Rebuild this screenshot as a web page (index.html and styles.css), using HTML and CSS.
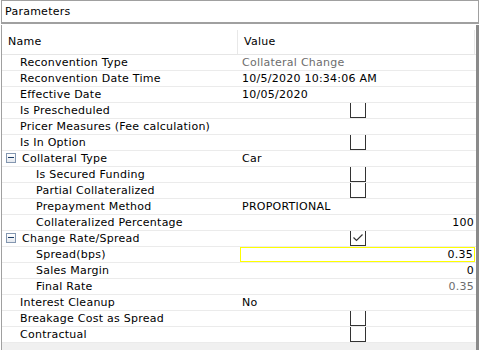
FILE: index.html
```html
<!DOCTYPE html>
<html lang="en">
	<head>
		<meta charset="utf-8">
		<title>Parameters</title>
		<link rel="stylesheet" href="styles.css">
	</head>
	<body>
	<div class="panel">
		<div class="panel-title">Parameters</div>
		<div class="grid">
			<div class="grid-head">
				<div class="col-name">Name</div>
				<div class="col-value">Value</div>
			</div>
			<div class="row"><div class="name lvl1">Reconvention Type</div><div class="value muted">Collateral Change</div></div>
			<div class="row"><div class="name lvl1">Reconvention Date Time</div><div class="value">10/5/2020 10:34:06 AM</div></div>
			<div class="row"><div class="name lvl1">Effective Date</div><div class="value">10/05/2020</div></div>
			<div class="row"><div class="name lvl1">Is Prescheduled</div><div class="value"><span class="check"></span></div></div>
			<div class="row"><div class="name lvl1">Pricer Measures (Fee calculation)</div><div class="value"></div></div>
			<div class="row"><div class="name lvl1">Is In Option</div><div class="value"><span class="check"></span></div></div>
			<div class="row"><div class="name lvl0"><span class="toggle"></span>Collateral Type</div><div class="value">Car</div></div>
			<div class="row"><div class="name lvl2">Is Secured Funding</div><div class="value"><span class="check"></span></div></div>
			<div class="row"><div class="name lvl2">Partial Collateralized</div><div class="value"><span class="check"></span></div></div>
			<div class="row"><div class="name lvl2">Prepayment Method</div><div class="value">PROPORTIONAL</div></div>
			<div class="row"><div class="name lvl2">Collateralized Percentage</div><div class="value num">100</div></div>
			<div class="row"><div class="name lvl0"><span class="toggle"></span>Change Rate/Spread</div><div class="value"><span class="check checked"><svg width="14" height="14" viewBox="0 0 14 14"><polyline points="2.5,6.5 5.5,9.5 11.5,3.5" fill="none" stroke="#333" stroke-width="1.2"/></svg></span></div></div>
			<div class="row"><div class="name lvl2">Spread(bps)</div><div class="value num focus">0.35</div></div>
			<div class="row"><div class="name lvl2">Sales Margin</div><div class="value num">0</div></div>
			<div class="row"><div class="name lvl2">Final Rate</div><div class="value num muted">0.35</div></div>
			<div class="row"><div class="name lvl1">Interest Cleanup</div><div class="value">No</div></div>
			<div class="row"><div class="name lvl1">Breakage Cost as Spread</div><div class="value"><span class="check"></span></div></div>
			<div class="row"><div class="name lvl1">Contractual</div><div class="value"><span class="check"></span></div></div>
		</div>
	</div>
	</body>
</html>
```

FILE: styles.css
```css
body{
	margin: 0;
	font-family: "DejaVu Sans", sans-serif;
	font-size: 11px;
	letter-spacing: .25px;
	color: #000;
	background: #fff;
}
.panel{
	height: 350px;
	margin-left: 1px;
	display: flex;
	flex-direction: column;
}
.panel-title{
	height: 20px;
	line-height: 20px;
	padding: 1px 0 0 3px;
	border: 1px solid #a0a0a0;
	border-bottom: 2px solid #a0a0a0;
}
.grid{
	flex: 1;
	margin-top: 1px;
	border-left: 1px solid #a0a0a0;
	border-right: 3px solid #8a8a8a;
	background: #f0f0f0;
}
.grid-head{
	display: flex;
	height: 24px;
	line-height: 24px;
	padding-top: 5px;
	background: #fff;
	border-bottom: 1px solid #e6e6e6;
}
.col-name{
	width: 229px;
	padding-left: 6px;
	border-right: 1px solid #e8e8e8;
}
.col-value{
	flex: 1;
	padding-left: 6px;
	margin-right: 1px;
	border-right: 1px solid #e8e8e8;
}
.row{
	display: grid;
	grid-template-columns: 238px 1fr;
	height: 15px;
	line-height: 15px;
	background: #fff;
	border-bottom: 1px solid #ebebeb;
	white-space: nowrap;
}
.name{
	display: flex;
	align-items: flex-start;
}
.lvl0{ padding-left: 4px; }
.lvl1{ padding-left: 18px; }
.lvl2{ padding-left: 34px; }
.value{
	padding: 0 2px;
}
.value.num{ text-align: right; }
.muted{ color: #6d6d6d; }
.value.focus{
	box-shadow: inset 0 0 0 1px #ffff00;
	margin-right: 1px;
}
.check{
	display: block;
	width: 14px;
	height: 14px;
	margin: 0 auto;
	border: 1px solid #333;
	border-top: none;
}
.check svg{ display: block; }
.toggle{
	position: relative;
	width: 8px;
	height: 8px;
	margin: 2px 6px 0 0;
	border: 1px solid #8497b0;
	background: linear-gradient(#fff, #e4e8ee);
}
.toggle::after{
	content: "";
	position: absolute;
	left: 1px;
	top: 3px;
	width: 6px;
	height: 1px;
	background: #1c3d66;
}
```
